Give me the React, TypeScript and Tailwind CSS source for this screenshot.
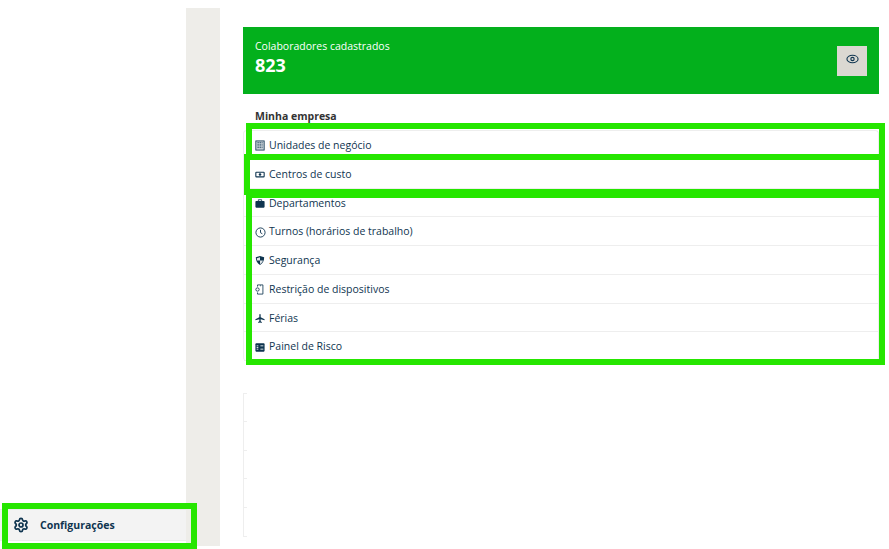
import { Settings } from "lucide-react";

const rows = [
  {
    label: "Unidades de negócio",
    icon: (
      <svg viewBox="0 0 12 12" className="w-[10px] h-[11px]">
        <rect x="1" y="0.5" width="10" height="11" fill="#c9d3da" stroke="#0f3550" />
        <path d="M3 2.5h1.5M5.5 2.5H7M8 2.5h1M3 4.5h1.5M5.5 4.5H7M8 4.5h1M3 6.5h1.5M5.5 6.5H7M8 6.5h1M3 8.5h1.5M5.5 8.5H7M8 8.5h1" stroke="#0f3550" strokeWidth="1" />
      </svg>
    ),
  },
  {
    label: "Centros de custo",
    icon: (
      <svg viewBox="0 0 12 12" className="w-[10px] h-[11px]">
        <rect x="1" y="3.2" width="10" height="5.6" rx="0.8" fill="none" stroke="#0f3550" strokeWidth="1.3" />
        <circle cx="6" cy="6" r="1.5" fill="#0f3550" />
      </svg>
    ),
  },
  {
    label: "Departamentos",
    icon: (
      <svg viewBox="0 0 12 12" className="w-[10px] h-[11px]">
        <path d="M4 3V1.5h4V3" fill="none" stroke="#0f3550" />
        <rect x="0.5" y="3" width="11" height="8" rx="1" fill="#0f3550" />
      </svg>
    ),
  },
  {
    label: "Turnos (horários de trabalho)",
    icon: (
      <svg viewBox="0 0 12 12" className="w-[11px] h-[11px]">
        <circle cx="6" cy="6" r="5" fill="none" stroke="#0f3550" />
        <path d="M6 3v3.2l2 1.2" fill="none" stroke="#0f3550" />
      </svg>
    ),
  },
  {
    label: "Segurança",
    icon: (
      <svg viewBox="0 0 12 12" className="w-[10px] h-[11px]">
        <path d="M6 0.5 11 2.2c0 4-1.5 7.5-5 9.3-3.5-1.8-5-5.3-5-9.3z" fill="#0f3550" />
        <path d="M6 2v4h3.5C9 8 8 9.3 6 10.3V6H2.5c-.2-1-.3-2-.3-2.8z" fill="#dfe5e8" />
      </svg>
    ),
  },
  {
    label: "Restrição de dispositivos",
    icon: (
      <svg viewBox="0 0 12 12" className="w-[10px] h-[11px]">
        <path d="M3 2.5V.5h6.5v11H3V9.5" fill="none" stroke="#0f3550" />
        <circle cx="3" cy="6" r="2" fill="none" stroke="#0f3550" />
        <path d="M6 1.5h1" stroke="#0f3550" />
      </svg>
    ),
  },
  {
    label: "Férias",
    icon: (
      <svg viewBox="0 0 12 12" className="w-[10px] h-[11px]">
        <path d="M6 0.5c.5 0 .8.6.8 1.5v2.4L11.5 7v1.2L6.8 6.9v2.4l1.3 1v1L6 10.8l-2.1.5v-1l1.3-1V6.9L.5 8.2V7l4.7-2.6V2c0-.9.3-1.5.8-1.5z" fill="#0f3550" />
      </svg>
    ),
  },
  {
    label: "Painel de Risco",
    icon: (
      <svg viewBox="0 0 12 12" className="w-[10px] h-[11px]">
        <rect x="0.5" y="1" width="11" height="10" rx="1" fill="#0f3550" />
        <path d="M2 4h2M2 6h2M2 8h2M6.5 4h3.5M6.5 8h3.5" stroke="#ffffff" />
      </svg>
    ),
  },
];

function Highlight({ className }: { className: string }) {
  return <div className={`absolute border-[6px] border-[#26e600] pointer-events-none ${className}`} />;
}

export default function App() {
  return (
    <div className="relative w-[889px] h-[549px] overflow-hidden bg-white flex text-[#0f3550] font-['Open_Sans','Noto_Sans',sans-serif]">
      {/* menu lateral */}
      <aside className="w-[186px] shrink-0 flex flex-col justify-end pb-[8px]">
        <div className="h-[32px] pt-[2px] bg-[#f3f3f3] border-y border-[#ececec] flex items-center pl-[13px] gap-[11px] text-[10.5px] font-bold">
          <Settings size={16} strokeWidth={2.6} className="-mt-[2px]" />
          <span>Configurações</span>
        </div>
      </aside>
      <div className="w-[34px] shrink-0 mt-[8px] mb-[3px] bg-[#eeede9]" />

      <main className="flex-1 pl-[23px] pr-[10px] pt-[27px]">
        <div className="h-[67px] bg-[#03b01c] flex items-center justify-between pl-[12px] pr-[12px] pb-[6px] text-white">
          <div>
            <div className="text-[10.5px] leading-[14px]">Colaboradores cadastrados</div>
            <div className="text-[18px] leading-[24px] font-bold">823</div>
          </div>
          <button className="w-[30px] h-[30px] mt-[6px] bg-[#dbd8d2] flex items-center justify-center pb-[4px]">
            <svg viewBox="0 0 14 10" className="w-[13px] h-[10px]">
              <ellipse cx="7" cy="5" rx="6" ry="4" fill="none" stroke="#0f3550" strokeWidth="1.2" />
              <circle cx="7" cy="5" r="1.8" fill="none" stroke="#0f3550" strokeWidth="1.2" />
            </svg>
          </button>
        </div>

        <h2 className="mt-[14px] pl-[12px] text-[10.5px] leading-[16px] font-bold text-[#333333]">Minha empresa</h2>

        <div className="mt-[6px] rounded-[4px] border-l border-t border-r border-[#eeeeee]">
          {rows.map((r) => (
            <div key={r.label} className="h-[28.75px] pt-[2px] flex items-center gap-[3px] pl-[11px] border-b border-[#eeeeee] text-[10.5px]">
              <span className="w-[11px] flex justify-start">{r.icon}</span>
              <span>{r.label}</span>
            </div>
          ))}
        </div>

        {/* tabela vazia */}
        <div className="mt-[32px] border-l border-[#eeeeee] w-[4px]">
          {[0, 1, 2, 3, 4].map((i) => (
            <div key={i} className="h-[28.8px] border-b border-[#eeeeee] first:border-t" />
          ))}
        </div>
      </main>

      {/* marcações verdes */}
      <Highlight className="left-[246px] top-[123px] w-[639px] h-[37px]" />
      <Highlight className="left-[244px] top-[154px] w-[641px] h-[41px]" />
      <Highlight className="left-[246px] top-[192px] w-[639px] h-[173px]" />
      <Highlight className="left-[2px] top-[503px] w-[195px] h-[46px]" />
    </div>
  );
}
